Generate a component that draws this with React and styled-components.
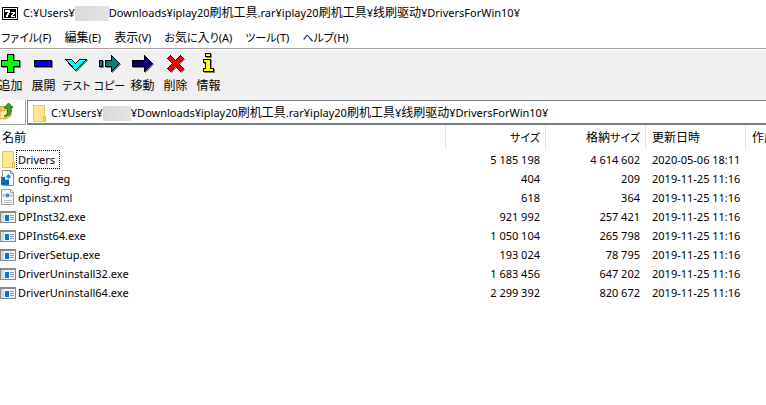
import { useState } from 'react';
import styled, { createGlobalStyle } from 'styled-components';

const GlobalStyle = createGlobalStyle`
  body {
    margin: 0;
    background: #fff;
    color: #000;
    font-family: "Noto Sans", "Noto Sans CJK JP", sans-serif;
    font-size: 11px;
    font-feature-settings: "palt";
    overflow: hidden;
  }
  * {
    box-sizing: border-box;
  }
`
const Kanji = styled.span`
  font-size: 12px;
`
const TitleBar = styled.header`
  display: flex;
  align-items: center;
  gap: 5px;
  height: 26px;
  padding-left: 2px;
`
const Path = styled.h1`
  margin: 0;
  font-size: 11px;
  font-weight: normal;
  line-height: 16px;
  white-space: pre;
`
const Hidden = styled.span`
  display: inline-block;
  width: ${({ $width }) => $width}px;
  height: 15px;
  background: linear-gradient(100deg, #d9d9d9, #e4e4e4);
  vertical-align: middle;
`
const MenuBar = styled.nav`
  display: flex;
  gap: 13px;
  height: 22px;
  padding-left: 1px;
`
const MenuButton = styled.button`
  padding: 0;
  border: 0;
  background: none;
  color: #000;
  font: inherit;
  line-height: 24px;
  white-space: nowrap;
`
const ToolBar = styled.div`
  display: flex;
  height: 52px;
  padding-top: 4px;
  border-top: 1px solid #a0a0a0;
  background: #f0f0f0;
  box-shadow: inset 0 1px #fff;
`
/* a primeira ferramenta fica um pouco cortada na borda da janela */
const Tools = styled.div`
  display: flex;
  margin-left: -6px;
`
const ToolButton = styled.button`
  display: flex;
  flex-direction: column;
  align-items: center;
  width: 33px;
  padding: 0;
  border: 0;
  background: none;
  color: #000;
  font: inherit;
  line-height: 20px;
  white-space: nowrap;

  svg {
    flex: none;
    margin-bottom: 3px;
  }
`
const AddressBar = styled.div`
  display: flex;
  height: 25px;
`
const UpButton = styled.button`
  width: 26px;
  padding: 0;
  border: 0;
  border-right: 1px solid #a0a0a0;
  border-bottom: 1px solid #a0a0a0;
  background: #fff;
  text-align: left;
`
const Address = styled.div`
  display: flex;
  flex: 1;
  align-items: center;
  gap: 4px;
  margin-left: 1px;
  padding: 2px 0 0 3px;
  border: 1px solid #7a7e85;
  border-width: 1px 0 2px 1px;
`
const AddressPath = styled(Path).attrs({ as: 'div' })``

const Files = styled.table`
  width: 100%;
  table-layout: fixed;
  border-spacing: 0;
`
const Column = styled.col`
  width: ${({ $width }) => ($width ? `${$width}px` : 'auto')};
`
const HeadCell = styled.th`
  height: 25px;
  padding: ${({ $right }) => ($right ? '0 5px 0 0' : '0 0 0 6px')};
  border-right: 1px solid #e5e5e5;
  font-weight: normal;
  line-height: 20px;
  text-align: ${({ $right }) => ($right ? 'right' : 'left')};
  white-space: nowrap;
  overflow: hidden;

  &:first-child {
    padding-left: 2px;
  }
  &:last-child {
    border-right: 0;
  }
`
const Cell = styled.td`
  height: 19px;
  padding: ${({ $right }) => ($right ? '0 6px 0 0' : '0 0 0 6px')};
  line-height: 18px;
  text-align: ${({ $right }) => ($right ? 'right' : 'left')};
  white-space: nowrap;

  &:first-child {
    padding-left: 0;
  }
`
const FileName = styled.div`
  display: flex;
  align-items: center;
`
const Label = styled.span`
  padding: 0 4px 0 1px;
  border: 1px dotted ${({ $focused }) => ($focused ? '#000' : 'transparent')};
  line-height: 17px;
`

// Os ideogramas são um pouco maiores do que as letras e os kana
const Text = ({ children }) => (
  <span>
    {children.split(/([\u4e00-\u9fff]+)/).map((part, i) => (
      i % 2 ? <Kanji key={i}>{part}</Kanji> : part
    ))}
  </span>
)

const Logo = () => (
  <svg width="16" height="13" viewBox="0 0 16 13" shapeRendering="crispEdges">
    <path d="M0 0h16v13H0z" fill="#000" />
    <path d="M1 1h14v11H1z" fill="#fff" />
    <path d="M2 2h12v9H2z" fill="#000" />
    <path d="M3 3h5v3H7v2H6v2H4V8h1V6h1V5H3zM9 5h4v2h-1v1h-1v1h2v1H9V8h1V7h1V6H9z" fill="#fff" />
  </svg>
)

const shapes = {
  add: { fill: '#00ff00', d: 'M9.5 1.5h6v6h6v6h-6v6h-6v-6h-6v-6h6z' },
  extract: { fill: '#0000ff', d: 'M3.5 7.5h17v6h-17z' },
  test: { fill: '#00ffff', d: 'M1.5 6.5h6l4 4 4-4h7l-11 11z' },
  copy: { fill: '#008080', d: 'M2.5 7.5h3v6h-3zM8.5 7.5h6v-5l8 8-8 8v-5h-6z' },
  move: { fill: '#000080', d: 'M2.5 7.5h12v-5l8 8-8 8v-5h-12z' },
  remove: { fill: '#ff0000', d: 'M4.5 5.5l3-3 5 5 5-5 3 3-5 5 5 5-3 3-5-5-5 5-3-3 5-5z' },
  info: { fill: '#ffff00', d: 'M9.5.5h5v3h-5zM7.5 6.5h7v9h3v3h-10v-3h2v-6h-2z' },
}

const ToolIcon = ({ name }) => (
  <svg width="25" height="20" viewBox="0 0 25 20" shapeRendering="crispEdges">
    <path d={shapes[name].d} transform="translate(1 1)" fill="#808080" stroke="#808080" />
    <path d={shapes[name].d} fill={shapes[name].fill} stroke="#000" />
  </svg>
)

const UpIcon = () => (
  <svg width="14" height="18" viewBox="0 0 14 18">
    <path d="M0 5l4-1 1 2 6 1v7l-6 3-5-1z" fill="#f3cf63" stroke="#c99b2d" />
    <path d="M0 9l9-1-4 8-5 1z" fill="#ffe9a0" stroke="#d7ab3e" />
    <path d="M4 14c4-1 4-4 3-8H4l4.500-5L13 5.500h-2c1 5-1 9-7 8.500z" fill="#35a829" stroke="#16711a" />
  </svg>
)

const FolderIcon = () => (
  <svg width="16" height="17" viewBox="0 0 16 17">
    <path d="M2.500.5h11v10l1 1v5h-12z" fill="#ffe794" stroke="#e9c651" />
    <path d="M12.500 11.500h2v5h-2z" fill="#ffdf78" stroke="#e3b93f" />
  </svg>
)

const RegIcon = () => (
  <svg width="16" height="17" viewBox="0 0 16 17">
    <path d="M2.500.5h8l3 3v12h-11z" fill="#fafafa" stroke="#8b8f92" />
    <path d="M10.500.5v3h3" fill="none" stroke="#8b8f92" />
    <path d="M1 7h4v3h4v5H1z" fill="#0879d2" />
    <path d="M8.500 4l2.500 2.500L8.500 9 6 6.500z" fill="#1b87dc" />
    <path d="M1 10h8M1 13h8M4 7v8M7 10v5" stroke="#0055a5" strokeWidth=".6" />
  </svg>
)

const XmlIcon = () => (
  <svg width="16" height="17" viewBox="0 0 16 17">
    <path d="M1.500.5h9l3 3v12h-12z" fill="#fafafa" stroke="#9a9da0" />
    <path d="M10.500.5v3h3" fill="none" stroke="#9a9da0" />
    <circle cx="7.500" cy="6.500" r="2" fill="#2e86ba" />
    <path d="M6.500 5.500l2 1-1 1z" fill="#6dbb78" />
    <path d="M4.500 5l-1.500 1.500 1.500 1.500M10.500 5l1.500 1.500-1.500 1.500" fill="none" stroke="#777" />
    <path d="M4 11.500h8M4 13.500h8" stroke="#bdbdbd" />
  </svg>
)

const ExeIcon = () => (
  <svg width="16" height="12" viewBox="0 0 16 12" shapeRendering="crispEdges">
    <path d="M0 0h16v12H0z" fill="#84898d" />
    <path d="M1 2h14v9H1z" fill="#f5f5f5" />
    <path d="M1 2h3v9H1z" fill="#d8dadb" />
    <path d="M5 4h4v6H5z" fill="#0078d7" />
    <path d="M10 4h4v1h-4zM10 6h4v1h-4zM10 8h4v1h-4z" fill="#999" />
  </svg>
)

const icons = { folder: FolderIcon, reg: RegIcon, xml: XmlIcon, exe: ExeIcon }

const menus = ['ファイル(F)', '編集(E)', '表示(V)', 'お気に入り(A)', 'ツール(T)', 'ヘルプ(H)']

const tools = [
  { icon: 'add', label: '追加' },
  { icon: 'extract', label: '展開' },
  { icon: 'test', label: 'テスト' },
  { icon: 'copy', label: 'コピー' },
  { icon: 'move', label: '移動' },
  { icon: 'remove', label: '削除' },
  { icon: 'info', label: '情報' },
]

const files = [
  { name: 'Drivers', type: 'folder', size: '5 185 198', packed: '4 614 602', modified: '2020-05-06 18:11' },
  { name: 'config.reg', type: 'reg', size: '404', packed: '209', modified: '2019-11-25 11:16' },
  { name: 'dpinst.xml', type: 'xml', size: '618', packed: '364', modified: '2019-11-25 11:16' },
  { name: 'DPInst32.exe', type: 'exe', size: '921 992', packed: '257 421', modified: '2019-11-25 11:16' },
  { name: 'DPInst64.exe', type: 'exe', size: '1 050 104', packed: '265 798', modified: '2019-11-25 11:16' },
  { name: 'DriverSetup.exe', type: 'exe', size: '193 024', packed: '78 795', modified: '2019-11-25 11:16' },
  { name: 'DriverUninstall32.exe', type: 'exe', size: '1 683 456', packed: '647 202', modified: '2019-11-25 11:16' },
  { name: 'DriverUninstall64.exe', type: 'exe', size: '2 299 392', packed: '820 672', modified: '2019-11-25 11:16' },
]

const archivePath = 'Downloads¥iplay20刷机工具.rar¥iplay20刷机工具¥线刷驱动¥DriversForWin10¥'

export default function App() {
  const [focused, setFocused] = useState('Drivers');

  return (
    <>
      <GlobalStyle />
      <TitleBar>
        <Logo />
        <Path>C:¥Users¥<Hidden $width={34} /><Text>{archivePath}</Text></Path>
      </TitleBar>
      <MenuBar>
        {menus.map((menu) => <MenuButton key={menu}><Text>{menu}</Text></MenuButton>)}
      </MenuBar>
      <ToolBar>
        <Tools>
          {tools.map(({ icon, label }) => (
            <ToolButton key={icon}>
              <ToolIcon name={icon} />
              <Text>{label}</Text>
            </ToolButton>
          ))}
        </Tools>
      </ToolBar>
      <AddressBar>
        <UpButton aria-label="上へ"><UpIcon /></UpButton>
        <Address>
          <FolderIcon />
          <AddressPath>C:¥Users¥<Hidden $width={28} /><Text>{`¥${archivePath}`}</Text></AddressPath>
        </Address>
      </AddressBar>
      <Files>
        <colgroup>
          <Column />
          <Column $width={100} />
          <Column $width={100} />
          <Column $width={100} />
          <Column $width={20} />
        </colgroup>
        <thead>
          <tr>
            <HeadCell><Text>名前</Text></HeadCell>
            <HeadCell $right><Text>サイズ</Text></HeadCell>
            <HeadCell $right><Text>格納サイズ</Text></HeadCell>
            <HeadCell><Text>更新日時</Text></HeadCell>
            <HeadCell><Text>作成日時</Text></HeadCell>
          </tr>
        </thead>
        <tbody>
          {files.map((file) => {
            const Icon = icons[file.type];
            return (
              <tr key={file.name} onClick={() => setFocused(file.name)}>
                <Cell>
                  <FileName>
                    <Icon />
                    <Label $focused={focused === file.name}>{file.name}</Label>
                  </FileName>
                </Cell>
                <Cell $right>{file.size}</Cell>
                <Cell $right>{file.packed}</Cell>
                <Cell>{file.modified}</Cell>
                <Cell />
              </tr>
            )
          })}
        </tbody>
      </Files>
    </>
  )
}
